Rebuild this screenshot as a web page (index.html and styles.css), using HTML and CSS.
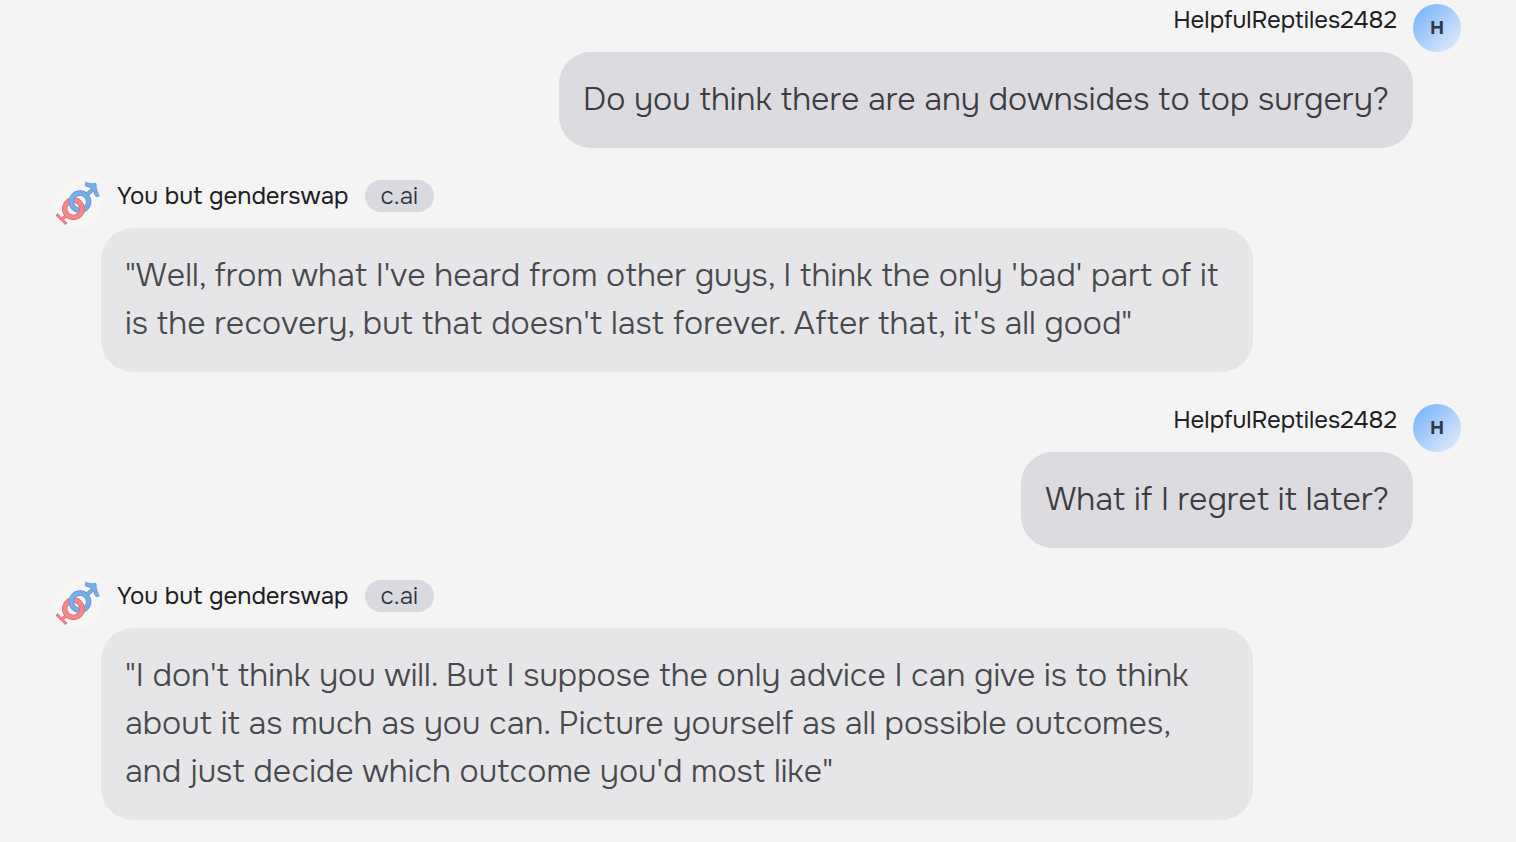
FILE: index.html
```html
<!DOCTYPE html>
<html lang="en">
<head>
<meta charset="utf-8">
<meta name="viewport" content="width=device-width, initial-scale=1">
<title>You but genderswap</title>
<link rel="stylesheet" href="styles.css">
</head>
<body>
<svg class="defs" aria-hidden="true">
  <symbol id="rings" viewBox="9 12 144 144">
    <circle cx="81" cy="84" r="72" fill="#f6f6f5"/>
    <g fill="none">
      <g stroke="#d9686d">
        <circle cx="70" cy="98" r="26" stroke-width="16"/>
        <path d="M51 117L34 131M20 115L49 144" stroke-width="9"/>
      </g>
      <g stroke="#f5898d">
        <circle cx="70" cy="98" r="26" stroke-width="12"/>
        <path d="M52 116L34 131M22 117L47 142" stroke-width="6"/>
      </g>
      <g stroke="#5b90d0">
        <circle cx="90" cy="77" r="26" stroke-width="16"/>
        <path d="M110 57L135 34" stroke-width="12"/>
      </g>
      <path d="M107 19C118 23 128 24 138 22C138 36 142 49 148 60L138 62C134 54 130 47 127 38C120 34 114 32 106 30Z" fill="#77aeea" stroke="#5b90d0" stroke-width="2"/>
      <g stroke="#77aeea">
        <circle cx="90" cy="77" r="26" stroke-width="12"/>
        <path d="M109 58L135 34" stroke-width="8"/>
      </g>
      <path d="M94 88A26 26 0 0 1 89 116" stroke="#d9686d" stroke-width="16"/>
      <path d="M93 86A26 26 0 0 1 88 117" stroke="#f5898d" stroke-width="12"/>
    </g>
  </symbol>
</svg>
<main class="chat">
  <article class="turn user">
    <div class="avatar">H</div>
    <div class="message">
      <header class="head"><span class="name">HelpfulReptiles2482</span></header>
      <p class="bubble">Do you think there are any downsides to top surgery?</p>
    </div>
  </article>
  <article class="turn">
    <svg class="picture" role="img" aria-label="You but genderswap"><use href="#rings"/></svg>
    <div class="message">
      <header class="head"><span class="name">You but genderswap</span><span class="badge">c.ai</span></header>
      <p class="bubble">"Well, from what I've heard from other guys, I think the only 'bad' part of it is the recovery, but that doesn't last forever. After that, it's all good"</p>
    </div>
  </article>
  <article class="turn user">
    <div class="avatar">H</div>
    <div class="message">
      <header class="head"><span class="name">HelpfulReptiles2482</span></header>
      <p class="bubble">What if I regret it later?</p>
    </div>
  </article>
  <article class="turn">
    <svg class="picture" role="img" aria-label="You but genderswap"><use href="#rings"/></svg>
    <div class="message">
      <header class="head"><span class="name">You but genderswap</span><span class="badge">c.ai</span></header>
      <p class="bubble">"I don't think you will. But I suppose the only advice I can give is to think about it as much as you can. Picture yourself as all possible outcomes, and just decide which outcome you'd most like"</p>
    </div>
  </article>
</main>
</body>
</html>
```
FILE: styles.css
```css
body {
  margin: 0;
  background: #f4f4f4;
  color: #202024;
  font-family: Onest, Inter, "Liberation Sans", sans-serif;
}

.defs {
  display: block;
  width: 0;
  height: 0;
}

.chat {
  display: flex;
  flex-direction: column;
  gap: 32px;
  padding: 4px 55px 22px 53px;
}

.turn {
  display: flex;
  align-items: flex-start;
}

.user {
  flex-direction: row-reverse;
}

.avatar,
.picture {
  flex: none;
  width: 48px;
  height: 48px;
}

.avatar {
  border-radius: 50%;
  background: linear-gradient(135deg, #7ab6fc 10%, #e3ecf9 95%);
  color: #32363d;
  font-size: 19px;
  font-weight: 700;
  line-height: 48px;
  text-align: center;
}

.message {
  display: flex;
  flex-direction: column;
  align-items: flex-start;
  gap: 16px;
  max-width: 1152px;
}

.user .message {
  align-items: flex-end;
}

.head {
  display: flex;
  gap: 16px;
  padding: 0 16px;
  font-size: 24px;
  line-height: 32px;
}

.badge {
  padding: 0 16px;
  border-radius: 16px;
  background: #d9dae0;
  color: #303136;
  font-weight: 350;
}

.bubble {
  margin: 0;
  padding: 24px;
  border-radius: 32px;
  background: #e6e6e8;
  color: #48494d;
  font-size: 32px;
  font-weight: 350;
  line-height: 48px;
}

.user .bubble {
  background: #dcdbe0;
  color: #3c3c42;
}
```
